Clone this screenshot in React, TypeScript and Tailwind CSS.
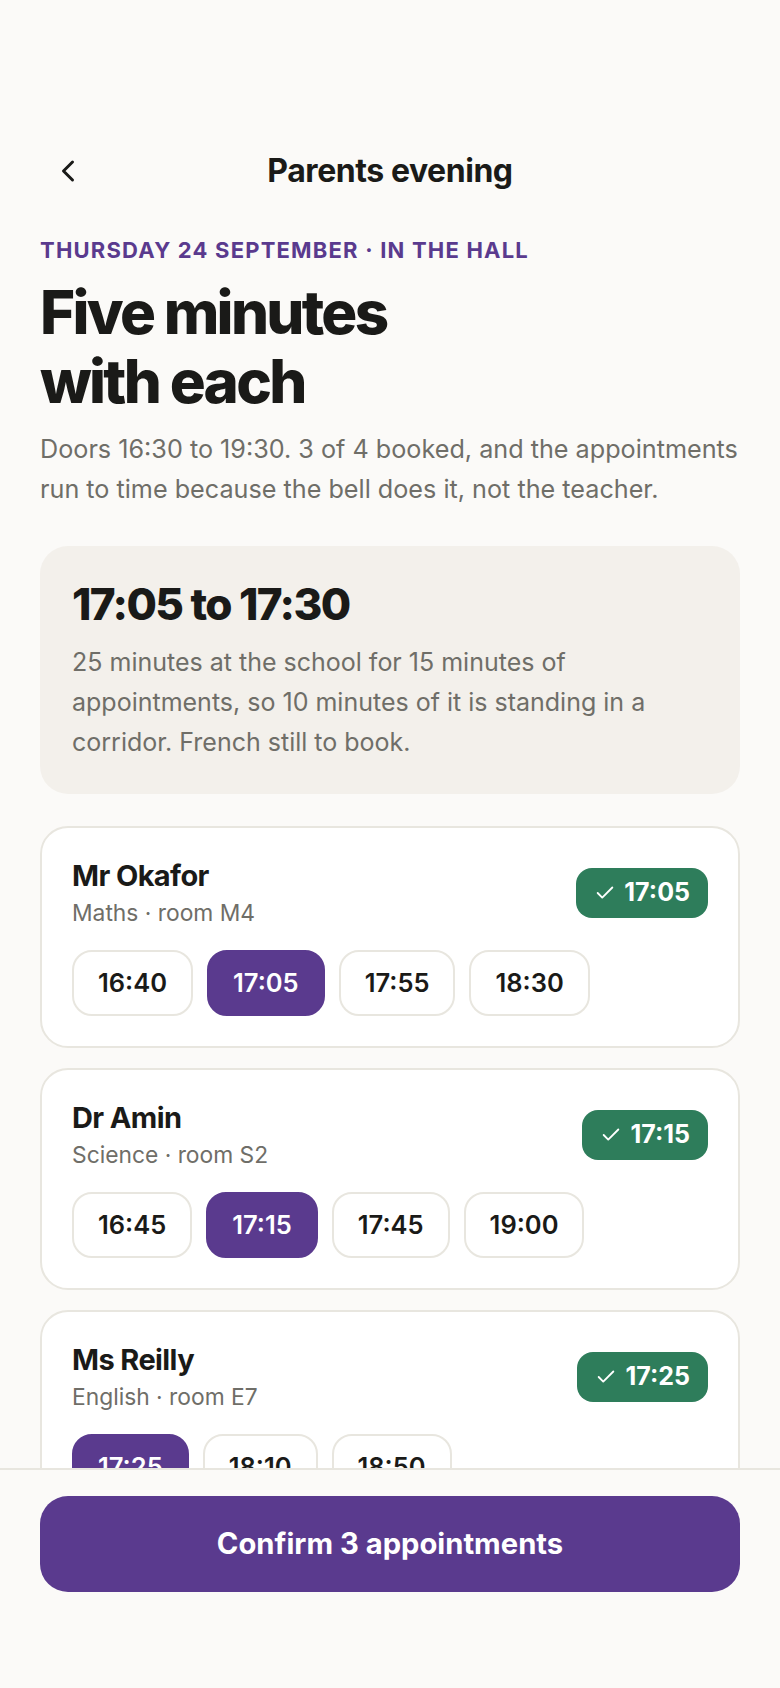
import { Check, ChevronLeft } from "lucide-react";

type Teacher = {
  name: string;
  detail: string;
  booked: string;
  slots: string[];
};

const teachers: Teacher[] = [
  { name: "Mr Okafor", detail: "Maths · room M4", booked: "17:05", slots: ["16:40", "17:05", "17:55", "18:30"] },
  { name: "Dr Amin", detail: "Science · room S2", booked: "17:15", slots: ["16:45", "17:15", "17:45", "19:00"] },
  { name: "Ms Reilly", detail: "English · room E7", booked: "17:25", slots: ["17:25", "18:10", "18:50"] },
];

function TeacherCard({ teacher }: { teacher: Teacher }) {
  return (
    <div className="rounded-[28px] border-2 border-[#e8e6df] bg-white px-[30px] pt-[29px] pb-[30px]">
      <div className="flex items-center justify-between">
        <div>
          <div className="text-[29px] leading-[38px] font-bold tracking-[-0.6px] text-[#1a1a18]">{teacher.name}</div>
          <div className="mt-[2px] text-[22.8px] leading-[32px] text-[#6f6e68]">{teacher.detail}</div>
        </div>
        <span className="flex h-[50px] items-center gap-[8.5px] rounded-[16px] bg-[#2e7d5b] px-[18px] text-[25px] font-bold text-white">
          <Check className="h-[22px] w-[22px]" strokeWidth={2} />
          {teacher.booked}
        </span>
      </div>
      <div className="mt-[21px] flex gap-[14px]">
        {teacher.slots.map((slot) =>
          slot === teacher.booked ? (
            <span key={slot} className="flex h-[66px] items-center rounded-[20px] border-2 border-[#5a3a8e] bg-[#5a3a8e] px-[24px] text-[25.5px] font-semibold text-white">
              {slot}
            </span>
          ) : (
            <span key={slot} className="flex h-[66px] items-center rounded-[20px] border-2 border-[#e8e6df] bg-white px-[24px] text-[25.5px] font-semibold text-[#1a1a18]">
              {slot}
            </span>
          ),
        )}
      </div>
    </div>
  );
}

export default function App() {
  return (
    <div className="flex h-[1688px] w-[780px] flex-col overflow-hidden bg-[#fbfaf8] font-['Inter',sans-serif]">
      <div className="min-h-0 flex-1 overflow-hidden px-[40px] pt-[140px]">
        <div className="relative flex h-[62px] items-center justify-center">
          <ChevronLeft className="absolute left-[10px] h-[36px] w-[36px] text-[#1a1a18]" strokeWidth={2} />
          <h2 className="text-[32px] font-bold tracking-[-0.45px] text-[#1a1a18]">Parents evening</h2>
        </div>
        <div className="mt-[32px] text-[22px] leading-[32px] font-bold tracking-[1.2px] text-[#5a3a8e]">
          THURSDAY 24 SEPTEMBER · IN THE HALL
        </div>
        <h1 className="mt-[12px] text-[60px] leading-[69px] font-extrabold tracking-[-2.7px] text-[#1a1a18]">
          Five minutes
          <br />
          with each
        </h1>
        <p className="mt-[13px] text-[25.2px] leading-[40px] text-[#6f6e68]">
          Doors 16:30 to 19:30. 3 of 4 booked, and the appointments run to time because the bell does it, not the teacher.
        </p>
        <div className="mt-[37px] rounded-[28px] bg-[#f3f0eb] px-[32px] pt-[30px] pb-[32px]">
          <div className="text-[44px] leading-[56px] font-extrabold tracking-[-1.6px] text-[#1a1a18]">17:05 to 17:30</div>
          <p className="mt-[10px] text-[25px] leading-[40px] text-[#6f6e68]">
            25 minutes at the school for 15 minutes of appointments, so 10 minutes of it is standing in a corridor. French still to book.
          </p>
        </div>
        <div className="mt-[32px] flex flex-col gap-[20px]">
          {teachers.map((teacher) => (
            <TeacherCard key={teacher.name} teacher={teacher} />
          ))}
        </div>
      </div>
      <div className="h-[220px] shrink-0 border-t-2 border-[#e8e6df] bg-[#fbfaf8] px-[40px] pt-[26px]">
        <button className="h-[96px] w-full rounded-[28px] bg-[#5a3a8e] text-[29.2px] font-bold text-white">
          Confirm 3 appointments
        </button>
      </div>
    </div>
  );
}
